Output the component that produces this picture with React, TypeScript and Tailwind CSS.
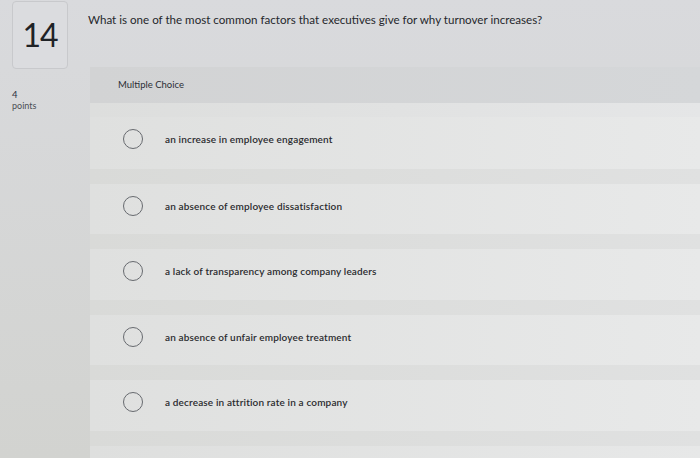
const OPTIONS = [
  'an increase in employee engagement',
  'an absence of employee dissatisfaction',
  'a lack of transparency among company leaders',
  'an absence of unfair employee treatment',
  'a decrease in attrition rate in a company',
];

function Radio() {
  return <span className="block w-[20px] h-[20px] rounded-full border-[1.5px] border-[#676a6f] shrink-0" />;
}

export default function App() {
  return (
    <div
      className="w-[700px] h-[458px] overflow-hidden flex bg-gradient-to-b from-[#d9dadd] to-[#d2d3d0] text-[#25272b]"
      style={{ fontFamily: 'Lato, "Open Sans", "Liberation Sans", sans-serif' }}
    >
      {/* Left: number + points */}
      <div className="w-[88px] shrink-0 flex flex-col">
        <div className="ml-[12px] mt-[1px] w-[56px] h-[68px] rounded-[4px] border border-[#c8c9cc] bg-[#dbdcdf] flex items-center justify-center">
          <span className="text-[32px] leading-none tracking-[-1px] text-[#1f2226]">14</span>
        </div>
        <div className="ml-[12px] mt-[20px] text-[9.5px] leading-[11px] text-[#283040]">4</div>
        <div className="ml-[12px] text-[9px] leading-[12px] text-[#4a4e55]">points</div>
      </div>

      {/* Right: question + choices */}
      <div className="flex-1 flex flex-col">
        <div className="h-[67px] pt-[12px]">
          <p className="text-[11.6px] leading-[16px] text-[#26282c]">
            What is one of the most common factors that executives give for why turnover increases?
          </p>
        </div>
        <div className="ml-[2px] h-[36px] flex items-center pl-[28px] bg-gradient-to-r from-[#d2d3d4] to-[#d5d7d9]">
          <span className="text-[9.5px] text-[#2b2e35]">Multiple Choice</span>
        </div>
        <div className="ml-[2px] flex-1 flex flex-col bg-gradient-to-r from-[#dedfde] to-[#e7e8e8]">
          {OPTIONS.map((opt, i) => (
            <div key={opt} className="flex flex-col h-[65.5px] shrink-0">
              <div
                className={
                  i === 0
                    ? 'h-[14px] bg-gradient-to-r from-[#dddedd] to-[#e5e6e7]'
                    : 'h-[15px] bg-gradient-to-r from-[#d9dad8] to-[#e0e1e1]'
                }
              />
              <div className="flex-1 flex items-start pt-[12px] bg-gradient-to-r from-[#dfe0df] to-[#e8e9e9]">
                <span className="ml-[33px]">
                  <Radio />
                </span>
                <span className="ml-[22px] mt-[4px] text-[10px] leading-[12px] tracking-[0.15px] font-semibold text-[#2a2b2e]">
                  {opt}
                </span>
              </div>
            </div>
          ))}
          <div className="h-[15px] bg-gradient-to-r from-[#d9dad8] to-[#e0e1e1]" />
        </div>
      </div>
    </div>
  );
}
